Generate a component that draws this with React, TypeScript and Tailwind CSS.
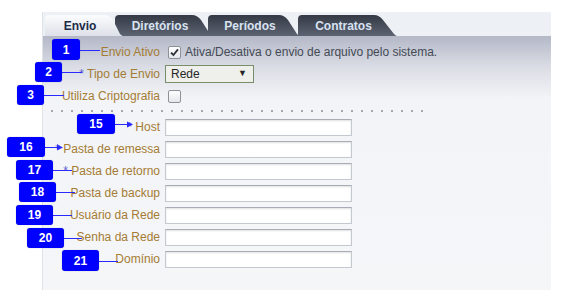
import React from "react";

interface TabProps {
  label: string;
  width: number;
  top: number;
  active?: boolean;
  className?: string;
}

// tab with a slanted right edge, drawn as an svg behind its label
function Tab({ label, width, top, active, className }: TabProps) {
  const d = `M0,21 L0,4 Q0,0 4,0 L${top - 6},0 Q${top - 1},0 ${top + 3},5 L${width - 3},19 Q${width - 1},21 ${width},21 Z`;
  const id = `g-${label}`;
  return (
    <div className={`relative h-[21px] shrink-0 ${className ?? ""}`} style={{ width }}>
      <svg className="absolute inset-0" width={width} height={21} viewBox={`0 0 ${width} 21`}>
        <defs>
          <linearGradient id={id} x1="0" y1="0" x2="0" y2="1">
            {active ? (
              <>
                <stop offset="0" stopColor="#fbfcfd" />
                <stop offset="1" stopColor="#dde1e8" />
              </>
            ) : (
              <>
                <stop offset="0" stopColor="#343945" />
                <stop offset="1" stopColor="#5d6372" />
              </>
            )}
          </linearGradient>
        </defs>
        <path d={d} fill={`url(#${id})`} />
      </svg>
      <div
        className={`relative flex h-full items-center justify-center pr-[8px] text-[12px] font-bold ${
          active ? "text-[#1d2a48]" : "text-[#d8e3f2]"
        }`}
      >
        {label}
      </div>
    </div>
  );
}

function Label({ children, req }: { children: React.ReactNode; req?: boolean }) {
  return (
    <div className="w-[117px] shrink-0 text-right text-[12px] text-[#a47c34]">
      {req && <span className="text-[#5b5bd0]">* </span>}
      {children}
    </div>
  );
}

function CheckBox({ checked }: { checked?: boolean }) {
  return (
    <div className="ml-[3px] flex h-[13px] w-[13px] items-center justify-center rounded-[2px] border border-[#8d9199] bg-[linear-gradient(to_bottom,#ffffff,#e4e6ea)]">
      {checked && (
        <svg width="9" height="9" viewBox="0 0 9 9">
          <path d="M1 4.6 L3.4 7 L8 1.4" stroke="#2b2f36" strokeWidth="1.8" fill="none" />
        </svg>
      )}
    </div>
  );
}

const fields = [
  { label: "Host", req: true },
  { label: "Pasta de remessa", req: true },
  { label: "Pasta de retorno", req: true },
  { label: "Pasta de backup" },
  { label: "Usuário da Rede" },
  { label: "Senha da Rede" },
  { label: "Domínio" },
];

const notes = [
  { n: "1", x: 52, y: 39, w: 28, h: 21, to: 100 },
  { n: "2", x: 35, y: 62, w: 27, h: 20, to: 82 },
  { n: "3", x: 17, y: 85, w: 27, h: 20, to: 64 },
  { n: "15", x: 77, y: 114, w: 38, h: 20, to: 132, arrow: true },
  { n: "16", x: 7, y: 137, w: 38, h: 20, to: 62, arrow: true },
  { n: "17", x: 16, y: 160, w: 37, h: 20, to: 72 },
  { n: "18", x: 19, y: 182, w: 37, h: 20, to: 75 },
  { n: "19", x: 16, y: 205, w: 37, h: 20, to: 72 },
  { n: "20", x: 27, y: 228, w: 37, h: 20, to: 82 },
  { n: "21", x: 62, y: 250, w: 37, h: 21, to: 118 },
];

export default function App() {
  return (
    <div className="relative h-[305px] w-[579px] overflow-hidden bg-white pl-[42px] pt-[12px] font-['Liberation_Sans',Arial,sans-serif]">
      <div className="flex h-[278px] w-[509px] flex-col border-l border-[#dfe2e8] bg-[#edf1f5]">
        {/* Tabs */}
        <div className="flex h-[24px] items-end pl-[2px]">
          <Tab label="Envio" width={78} top={65} active className="z-10" />
          <Tab label="Diretórios" width={98} top={83} className="z-[3] -ml-[8px]" />
          <Tab label="Períodos" width={92} top={77} className="z-[2] -ml-[5px]" />
          <Tab label="Contratos" width={99} top={82} className="z-[1] -ml-[2px]" />
        </div>

        {/* Content */}
        <div className="flex-1 bg-[linear-gradient(to_bottom,#b4b8c7_0px,#d9dce4_30px,#f3f4f7_62px,#f5f6f8_100%)] pt-[5px]">
          <div className="flex h-[22px] items-center">
            <Label>Envio Ativo</Label>
            <div className="ml-[5px] flex items-center">
              <CheckBox checked />
              <span className="ml-[4px] text-[12px] text-[#444a54]">
                Ativa/Desativa o envio de arquivo pelo sistema.
              </span>
            </div>
          </div>
          <div className="flex h-[22px] items-center">
            <Label req>Tipo de Envio</Label>
            <div className="ml-[5px] flex h-[18px] w-[89px] items-center justify-between border border-[#778e68] bg-[#efefeb] pl-[5px] pr-[6px] text-[12px] text-[#262626]">
              <span>Rede</span>
              <span className="text-[9px]">▼</span>
            </div>
          </div>
          <div className="flex h-[22px] items-center">
            <Label>Utiliza Criptografia</Label>
            <div className="ml-[5px]">
              <CheckBox />
            </div>
          </div>

          {/* dotted separator */}
          <div className="mb-[4px] mt-[3px] flex gap-[8px] pl-[8px]">
            {Array.from({ length: 38 }).map((_, i) => (
              <span key={i} className="h-[2px] w-[2px] bg-[#a3a7ae]" />
            ))}
          </div>

          {fields.map((f) => (
            <div key={f.label} className="flex h-[22px] items-center">
              <Label req={f.req}>{f.label}</Label>
              <div className="ml-[5px] h-[17px] w-[187px] border border-[#c4c8cf] border-t-[#a8acb4] bg-white shadow-[inset_0_1px_2px_rgba(0,0,0,0.12)]" />
            </div>
          ))}
        </div>
      </div>

      {/* Annotation callouts */}
      {notes.map((a) => {
        const cy = a.y + Math.round(a.h / 2);
        return (
          <React.Fragment key={a.n}>
            <div
              className="absolute h-px bg-[#2a2aff]"
              style={{ left: a.x + a.w, top: cy, width: a.to - a.x - a.w }}
            />
            {a.arrow && (
              <svg className="absolute" style={{ left: a.to - 5, top: cy - 3 }} width="6" height="7" viewBox="0 0 6 7">
                <path d="M0 0.5 L6 3.5 L0 6.5 Z" fill="#2a2aff" />
              </svg>
            )}
            <div
              className="absolute flex items-center justify-center rounded-[3px] bg-[#0000ff] text-[12px] font-bold text-white shadow-[0_0_1px_rgba(0,0,0,0.4)]"
              style={{ left: a.x, top: a.y, width: a.w, height: a.h }}
            >
              {a.n}
            </div>
          </React.Fragment>
        );
      })}
    </div>
  );
}
